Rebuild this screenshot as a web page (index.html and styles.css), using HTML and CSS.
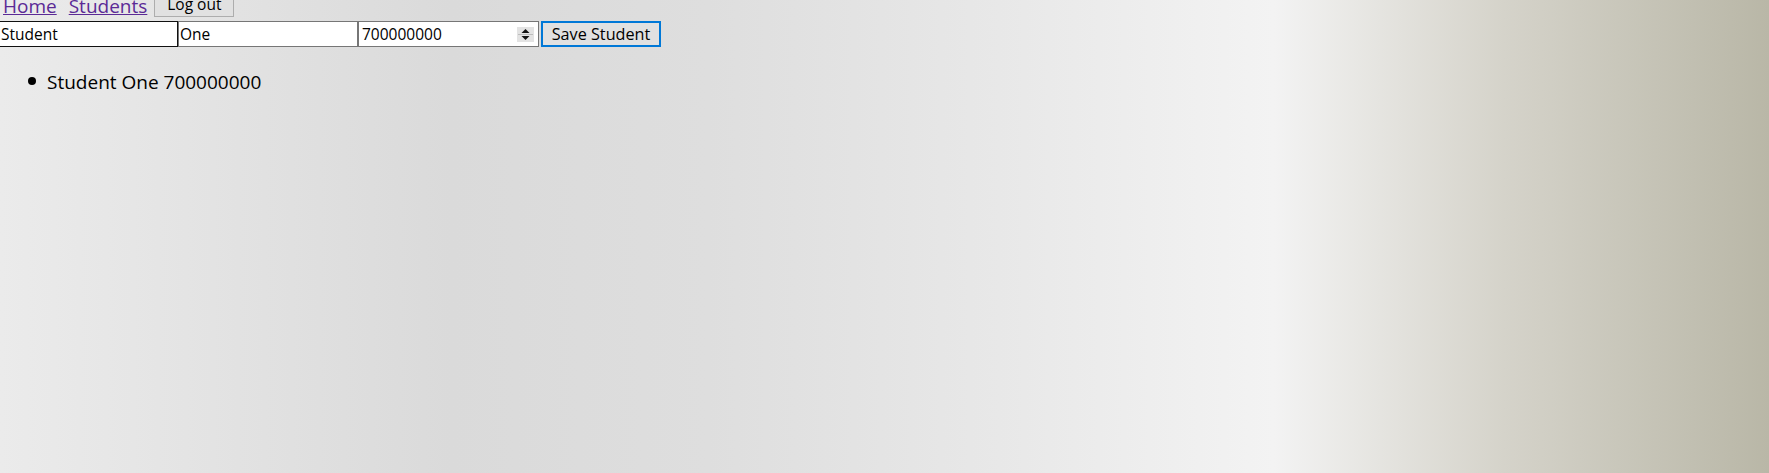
FILE: index.html
```html
<!DOCTYPE html>
<html lang="en">
<head>
<meta charset="utf-8">
<title>Students</title>
<link rel="stylesheet" href="styles.css">
</head>
<body>
<nav class="nav">
  <a class="nav-link" href="#">Home</a>
  <a class="nav-link" href="#">Students</a>
  <button class="btn btn-logout" type="button">Log out</button>
</nav>
<form class="student-form">
  <input class="field field-first" type="text" value="Student">
  <input class="field field-mid" type="text" value="One">
  <div class="field field-number">
    <input class="number-input" type="text" value="700000000">
    <span class="spin">
      <svg width="17" height="15" viewBox="0 0 17 15" aria-hidden="true">
        <rect x="0" y="0" width="17" height="15" fill="#e3e3e3"/>
        <line x1="1" y1="7.5" x2="16" y2="7.5" stroke="#bdbdbd" stroke-width="1"/>
        <path d="M4.5 6 L8.5 2 L12.5 6 Z" fill="#111"/>
        <path d="M4.5 9 L8.5 13 L12.5 9 Z" fill="#111"/>
      </svg>
    </span>
  </div>
  <button class="btn btn-save" type="button">Save Student</button>
</form>
<ul class="student-list">
  <li class="student-item">Student One 700000000</li>
</ul>
</body>
</html>
```
FILE: styles.css
```css
html, body {
  margin: 0;
  padding: 0;
}
body {
  min-height: 100vh;
  font-family: "Open Sans", "Noto Sans", sans-serif;
  color: #000;
  background: linear-gradient(to right, #ebebeb 0%, #dadada 25.5%, #dedede 40%, #e8e8e8 56.5%, #f3f3f3 72%, #d5d3ca 85%, #b9b7a7 100%);
}
.nav {
  display: flex;
  align-items: flex-end;
  height: 17px;
  padding-left: 3px;
}
.nav-link {
  font-size: 19px;
  line-height: 20px;
  color: #5b2a96;
  text-decoration: underline;
  margin-right: 12px;
  margin-bottom: 1px;
}
.nav-link + .nav-link {
  margin-right: 7px;
}
.btn {
  font-family: "Open Sans", "Noto Sans", sans-serif;
  font-size: 15.5px;
  color: #000;
  background: #e1e1e1;
  border: 1px solid #adadad;
  border-radius: 0;
  padding: 0;
  margin: 0;
}
.btn-logout {
  width: 80px;
  height: 26px;
  line-height: 22px;
}
.student-form {
  display: flex;
  margin-top: 4px;
  height: 26px;
}
.field {
  box-sizing: border-box;
  height: 26px;
  margin: 0;
  border: 1px solid #767676;
  background: #fff;
  font-family: "Open Sans", "Noto Sans", sans-serif;
  font-size: 15.5px;
  color: #000;
  outline: none;
}
.field-first {
  width: 180px;
  margin-left: -2px;
  padding: 0 0 0 2px;
  border-color: #111;
}
.field-mid {
  width: 180px;
  padding: 0 0 0 1px;
}
.field-number {
  display: flex;
  align-items: center;
  width: 181px;
  padding: 0 4px 0 3px;
}
.number-input {
  flex: 1;
  min-width: 0;
  border: 0;
  padding: 0;
  margin: 0;
  background: transparent;
  font-family: "Open Sans", "Noto Sans", sans-serif;
  font-size: 15.5px;
  color: #000;
  outline: none;
}
.spin {
  display: flex;
  width: 17px;
  height: 15px;
}
.btn-save {
  box-sizing: border-box;
  width: 120px;
  height: 26px;
  margin-left: 2px;
  border: 2px solid #0078d7;
  font-size: 16.2px;
}
.student-list {
  list-style: none;
  margin: 22px 0 0 0;
  padding-left: 28px;
  font-size: 19px;
  line-height: 26px;
}
.student-item {
  display: flex;
  align-items: center;
}
.student-item::before {
  content: "";
  width: 8px;
  height: 8px;
  border-radius: 50%;
  background: #000;
  margin-right: 11px;
  margin-top: -2px;
}
```
